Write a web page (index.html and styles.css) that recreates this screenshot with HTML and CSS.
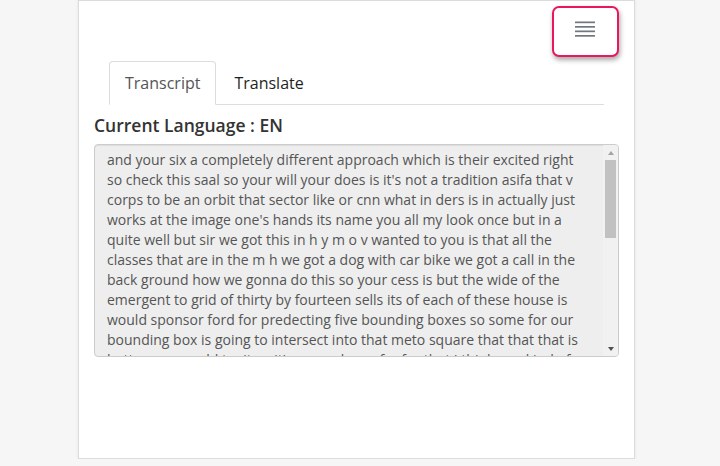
FILE: index.html
```html
<!DOCTYPE html>
<html>
<head>
<meta charset="utf-8">
<link rel="stylesheet" href="styles.css">
</head>
<body>
<div class="card">
  <div class="toolbar">
    <button class="menu-btn" type="button" aria-label="Menu">
      <svg width="20" height="16" viewBox="0 0 20 16">
        <rect x="0" y="0.5" width="20" height="1.7" fill="#6f7780"/>
        <rect x="0" y="5" width="20" height="1.7" fill="#6f7780"/>
        <rect x="0" y="9.5" width="20" height="1.7" fill="#6f7780"/>
        <rect x="0" y="14" width="20" height="1.7" fill="#6f7780"/>
      </svg>
    </button>
  </div>
  <ul class="tabs">
    <li class="tab active">Transcript</li>
    <li class="tab">Translate</li>
  </ul>
  <h2 class="lang">Current Language : EN</h2>
  <div class="transcript">
    <div class="transcript-text">and your six a completely different approach which is their excited right so check this saal so your will your does is it's not a tradition asifa that v corps to be an orbit that sector like or cnn what in ders is in actually just works at the image one's hands its name you all my look once but in a quite well but sir we got this in h y m o v wanted to you is that all the classes that are in the m h we got a dog with car bike we got a call in the back ground how we gonna do this so your cess is but the wide of the emergent to grid of thirty by fourteen sells its of each of these house is would sponsor ford for predecting five bounding boxes so some for our bounding box is going to intersect into that meto square that that that is better you would try it so it's gonna be so far for that I think you kind of the one that we got in the middle of the image so we can find the box and then we can see how it looks</div>
    <div class="scrollbar" aria-hidden="true">
      <div class="sb-btn"><span class="arrow-up"></span></div>
      <div class="sb-track"><div class="sb-thumb"></div></div>
      <div class="sb-btn"><span class="arrow-down"></span></div>
    </div>
  </div>
</div>
</body>
</html>
```

FILE: styles.css
```css
* { box-sizing: border-box; }
html, body {
  margin: 0;
  padding: 0;
  background: #f6f6f6;
  font-family: "Open Sans", "Noto Sans", sans-serif;
}
.card {
  margin-left: 78px;
  width: 557px;
  height: 459px;
  background: #fff;
  border: 1px solid #dcdcdc;
  box-shadow: 0 0 3px rgba(0,0,0,0.08);
  padding: 0 15px 0 15px;
}
.toolbar {
  display: flex;
  justify-content: flex-end;
  padding-top: 5px;
}
.menu-btn {
  width: 67px;
  height: 51px;
  background: #fff;
  border: 2px solid #e8185a;
  border-radius: 7px;
  box-shadow: 1px 3px 5px rgba(0,0,0,0.35);
  display: flex;
  align-items: center;
  justify-content: center;
  padding: 0 2px 5px 0;
  margin: 0;
}
.tabs {
  list-style: none;
  display: flex;
  margin: 4px 15px 0 15px;
  padding: 0;
  border-bottom: 1px solid #dddddd;
}
.tab {
  font-size: 16px;
  line-height: 22px;
  padding: 10px 15px 10px 15px;
  color: #1f1f1f;
  border: 1px solid transparent;
  border-radius: 4px 4px 0 0;
  margin-bottom: -1px;
  margin-right: 2px;
}
.tab.active {
  color: #555;
  background: #fff;
  border-color: #ddd #ddd transparent #ddd;
}
.lang {
  margin: 7px 0 0 0;
  font-size: 17.5px;
  line-height: 26px;
  font-weight: 600;
  color: #333;
}
.transcript {
  display: flex;
  margin-top: 6px;
  width: 525px;
  height: 213px;
  background: #eeeeee;
  border: 1px solid #cccccc;
  border-radius: 4px;
  box-shadow: inset 0 1px 1px rgba(0,0,0,0.075);
  overflow: hidden;
}
.transcript-text {
  flex: 1;
  min-width: 0;
  overflow: hidden;
  padding: 5px 12px;
  font-size: 14px;
  line-height: 20px;
  color: #555;
}
.scrollbar {
  width: 15px;
  flex: none;
  display: flex;
  flex-direction: column;
  background: #f1f1f1;
}
.sb-btn {
  height: 15px;
  display: flex;
  align-items: center;
  justify-content: center;
}
.arrow-up {
  width: 0;
  height: 0;
  border-left: 3.5px solid transparent;
  border-right: 3.5px solid transparent;
  border-bottom: 4px solid #a3a3a3;
}
.arrow-down {
  width: 0;
  height: 0;
  border-left: 3.5px solid transparent;
  border-right: 3.5px solid transparent;
  border-top: 4px solid #505050;
}
.sb-track {
  flex: 1;
  padding: 0 2px;
}
.sb-thumb {
  height: 78px;
  background: #c1c1c1;
}
```
